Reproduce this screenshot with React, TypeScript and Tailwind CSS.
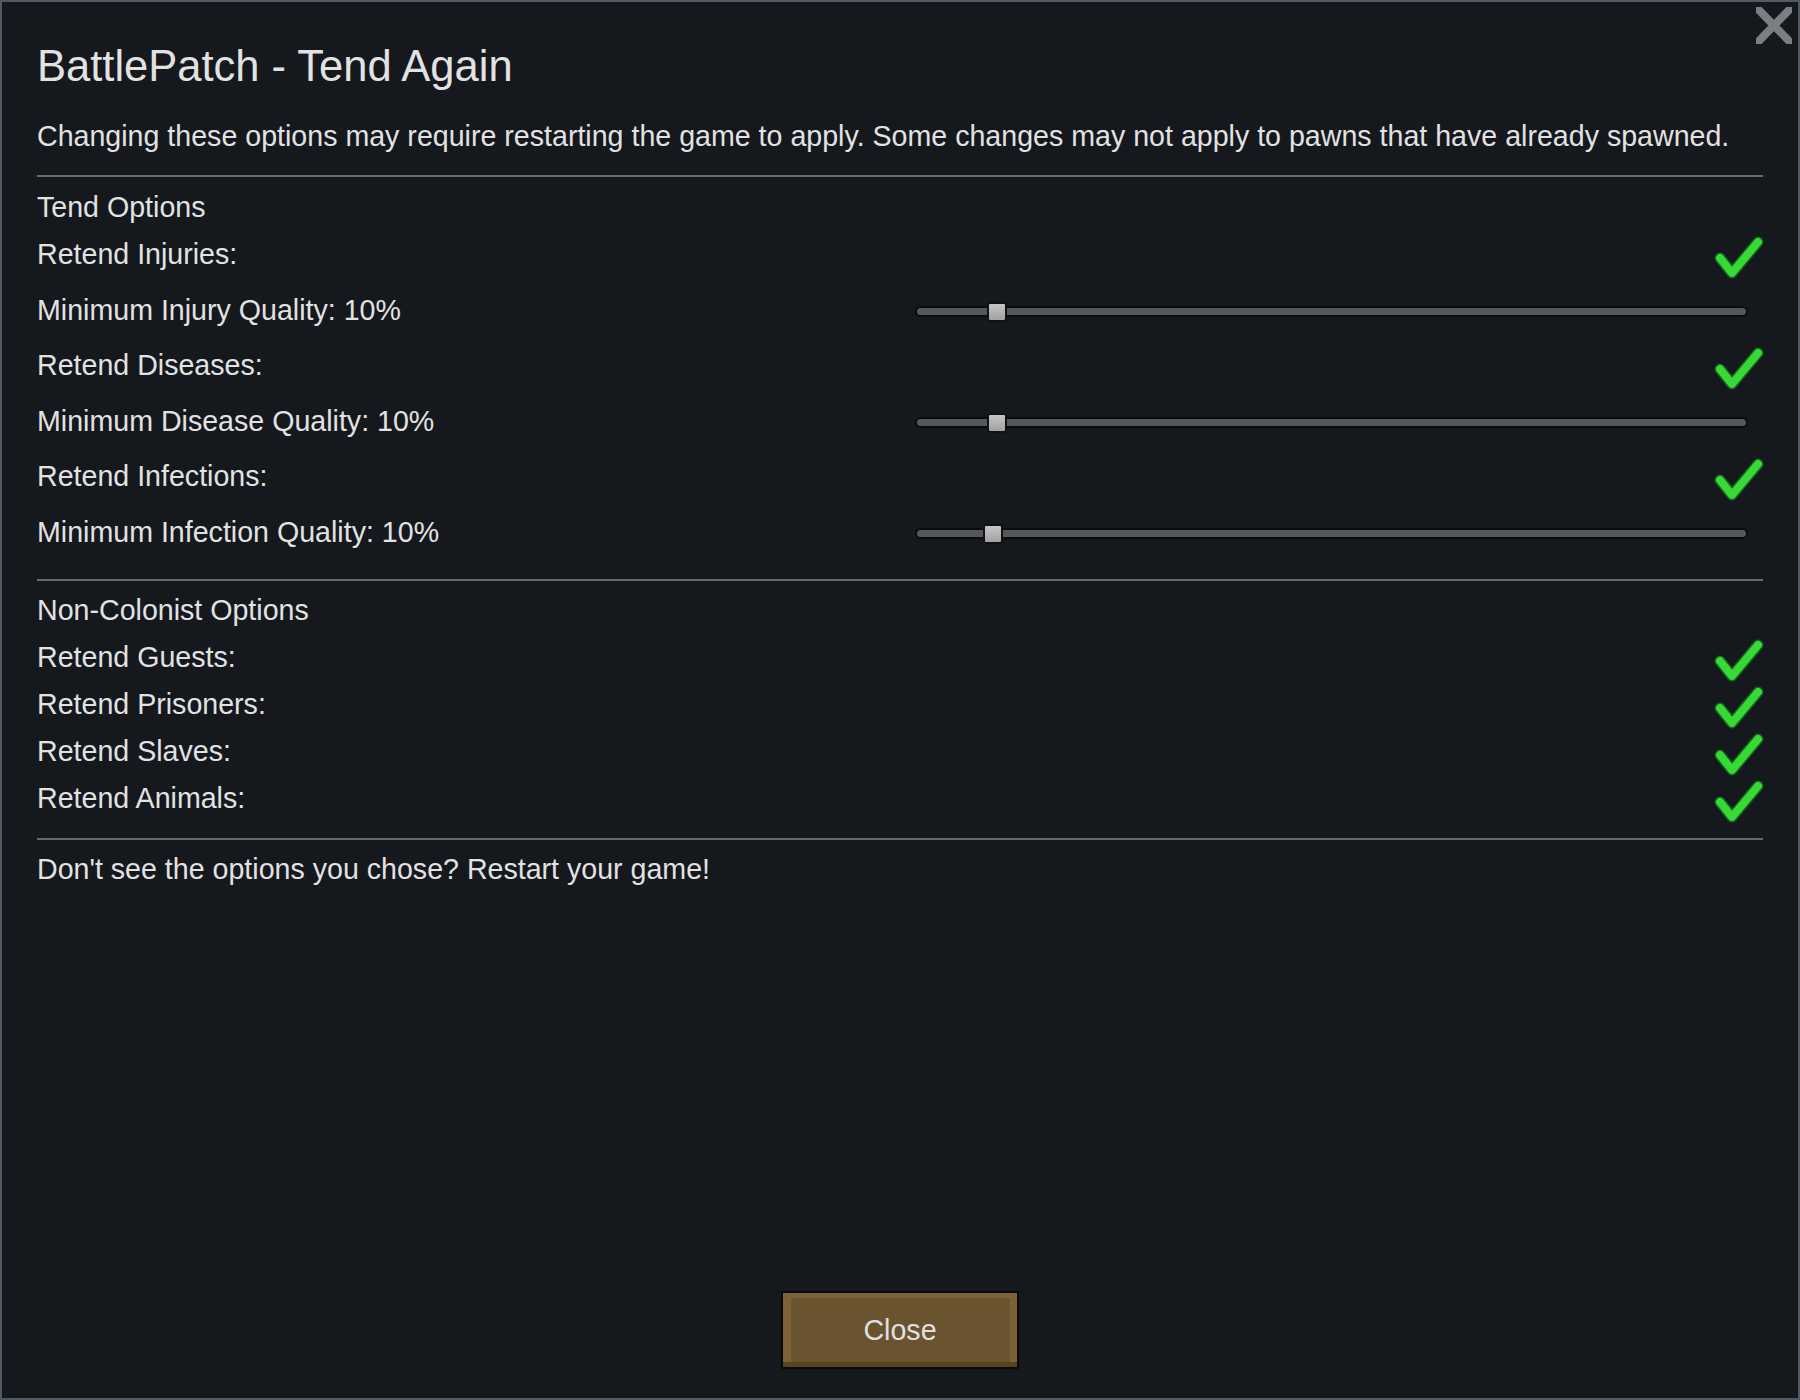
import React from "react";

type Row = { kind: "check" | "slider"; label: string; pos?: number };

const tendRows: Row[] = [
  { kind: "check", label: "Retend Injuries:" },
  { kind: "slider", label: "Minimum Injury Quality: 10%", pos: 9.8 },
  { kind: "check", label: "Retend Diseases:" },
  { kind: "slider", label: "Minimum Disease Quality: 10%", pos: 9.8 },
  { kind: "check", label: "Retend Infections:" },
  { kind: "slider", label: "Minimum Infection Quality: 10%", pos: 9.4 },
];

const otherRows = [
  "Retend Guests:",
  "Retend Prisoners:",
  "Retend Slaves:",
  "Retend Animals:",
];

const Check = () => (
  <svg
    width="50"
    height="46"
    viewBox="0 0 50 46"
    fill="none"
    className="overflow-visible -mr-px shrink-0"
  >
    <path
      d="M6 27 L18 42 L44 11"
      stroke="#15601a"
      strokeWidth="11"
      strokeLinecap="round"
      strokeLinejoin="round"
    />
    <path
      d="M6 27 L18 42 L44 11"
      stroke="#36d936"
      strokeWidth="8"
      strokeLinecap="round"
      strokeLinejoin="round"
    />
  </svg>
);

const Slider = ({ pos }: { pos: number }) => (
  <div className="relative w-[833px] h-[20px] mr-[15px] mt-[4px] flex items-center">
    <div className="w-full h-[11px] rounded-full bg-[#55575a] border-2 border-[#0b0c0e]" />
    <div
      className="absolute top-0 w-[20px] h-[20px] -translate-x-1/2 rounded-[3px] border-2 border-[#101113] bg-gradient-to-b from-[#c6c6c6] to-[#a2a2a2]"
      style={{ left: `${pos}%` }}
    />
  </div>
);

const Divider = () => <div className="h-[2px] bg-[#66696e]" />;

export default function App() {
  return (
    <div
      className="relative w-[1800px] h-[1400px] flex flex-col border-2 border-[#525a63] bg-[#15181d] text-[#e2e2e2] px-[35px]"
      style={{ fontFamily: '"Liberation Sans", Arial, sans-serif' }}
    >
      {/* close X */}
      <svg
        width="36"
        height="37"
        viewBox="0 0 36 37"
        className="absolute right-[6px] top-[5px]"
      >
        <line x1="0" y1="0" x2="36" y2="37" stroke="#7b7e82" strokeWidth="8" />
        <line x1="36" y1="0" x2="0" y2="37" stroke="#7b7e82" strokeWidth="8" />
      </svg>

      <h1 className="mt-[43px] text-[43.5px] leading-[42px] h-[42px] whitespace-nowrap">
        BattlePatch - Tend Again
      </h1>
      <p className="mt-[35px] text-[28.6px] leading-[28px] h-[28px] whitespace-nowrap">
        Changing these options may require restarting the game to apply. Some
        changes may not apply to pawns that have already spawned.
      </p>

      <div className="mt-[25px]">
        <Divider />
      </div>

      {/* TEND OPTIONS */}
      <div className="pt-[16px] text-[28.6px] leading-[28px]">
        <div className="h-[28px]">Tend Options</div>
        <div className="mt-[5.5px]">
          {tendRows.map((row) => (
            <div key={row.label} className="h-[55.5px] flex items-center">
              <span className="flex-1 whitespace-nowrap">{row.label}</span>
              {row.kind === "check" ? <Check /> : <Slider pos={row.pos ?? 10} />}
            </div>
          ))}
        </div>
      </div>

      <div className="mt-[19.5px]">
        <Divider />
      </div>

      {/* NON-COLONIST */}
      <div className="pt-[15px] text-[28.6px] leading-[28px]">
        <div className="h-[28px]">Non-Colonist Options</div>
        <div className="mt-[9.5px]">
          {otherRows.map((label) => (
            <div key={label} className="h-[47px] flex items-center">
              <span className="flex-1">{label}</span>
              <Check />
            </div>
          ))}
        </div>
      </div>

      <div className="mt-[16px]">
        <Divider />
      </div>

      <p className="mt-[15px] text-[28.6px] leading-[28px] h-[28px] whitespace-nowrap">
        Don't see the options you chose? Restart your game!
      </p>

      <div className="mt-auto pb-[29px] flex justify-center">
        <button className="w-[238px] h-[78px] border-2 border-[#0a0a0a] bg-[#6a532f] shadow-[inset_0_-5px_0_#574322,inset_8px_5px_0_#7c6236,inset_-7px_0_0_#7a6034] text-[28.6px] text-[#e0e0e0]">
          Close
        </button>
      </div>
    </div>
  );
}
